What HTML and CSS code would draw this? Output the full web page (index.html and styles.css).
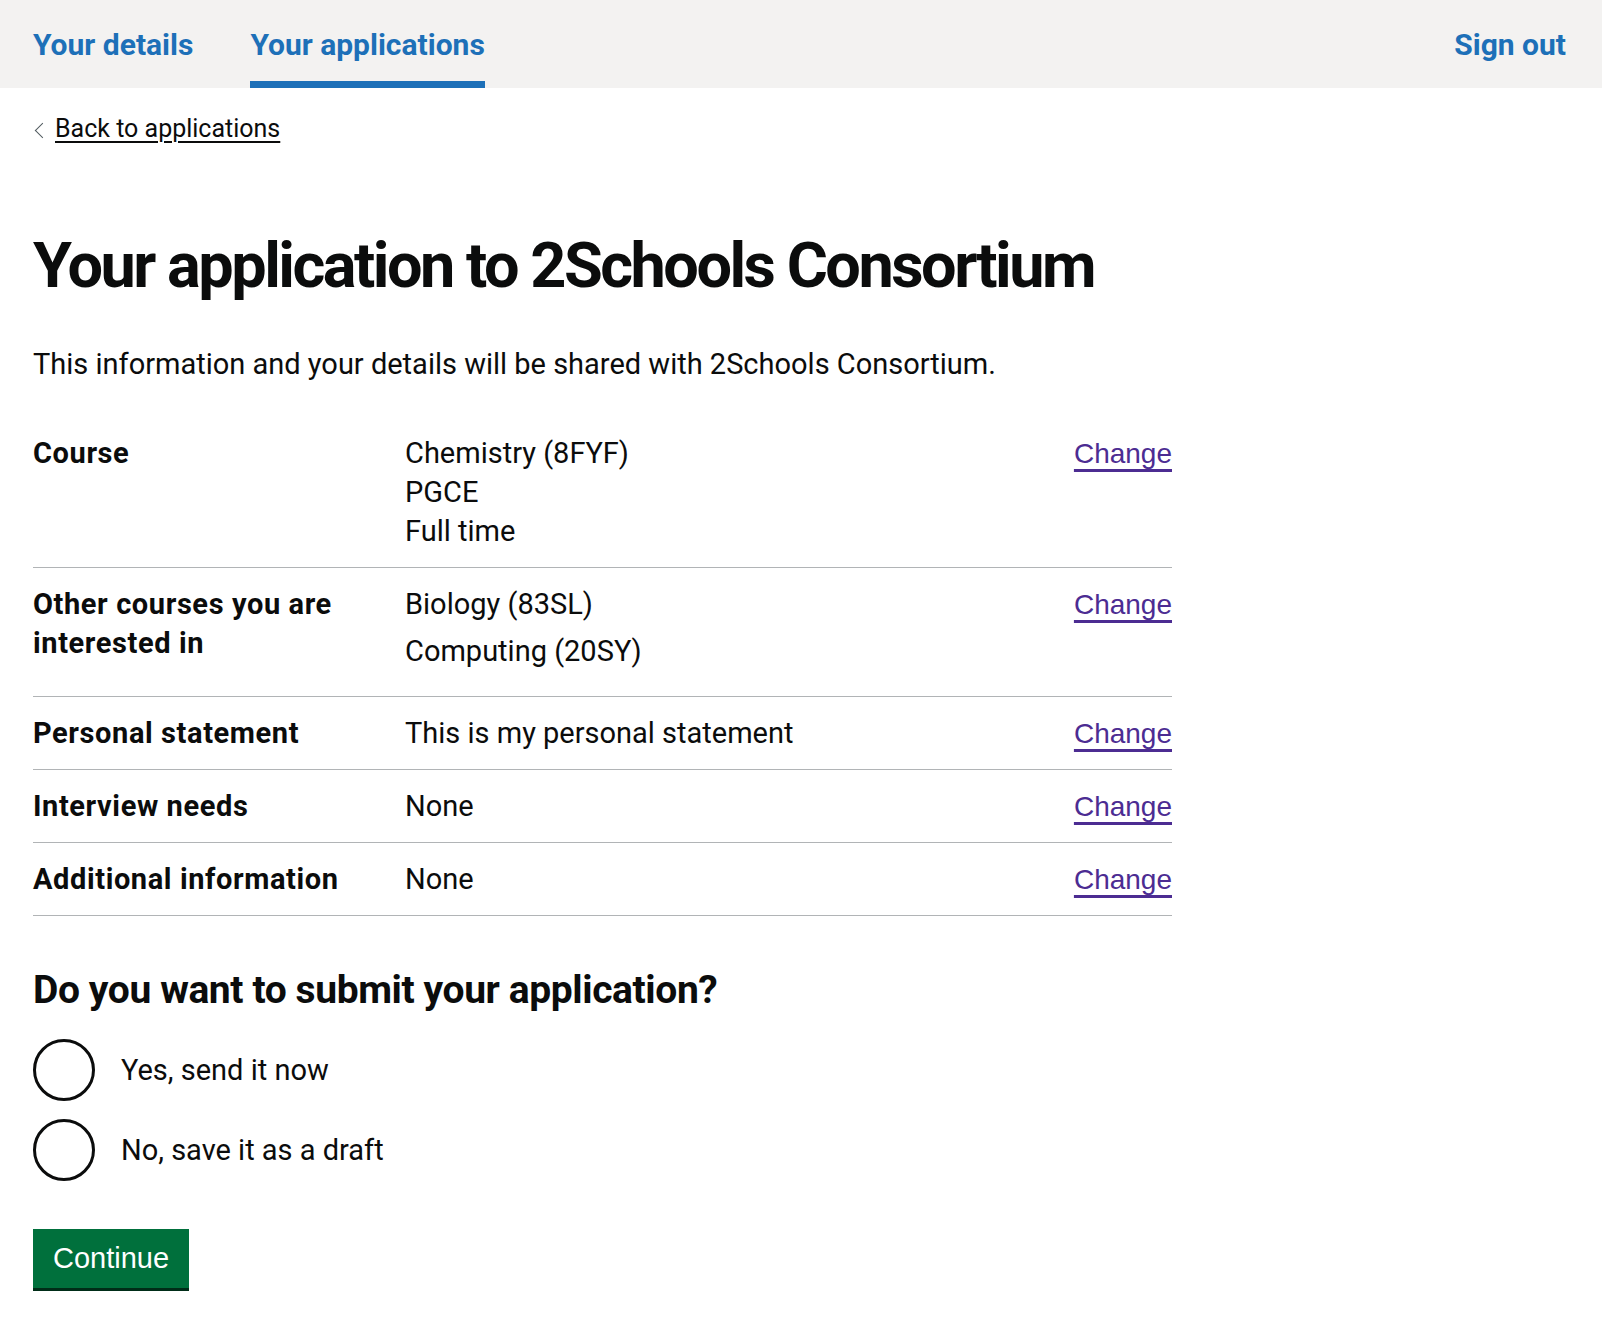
FILE: index.html
```html
<!DOCTYPE html>
<html lang="en">
<head>
<meta charset="utf-8">
<title>Your application to 2Schools Consortium</title>
<link rel="stylesheet" href="styles.css">
</head>
<body>
<header class="top-bar">
  <nav class="primary-nav">
    <a class="nav-link" href="#">Your details</a>
    <a class="nav-link nav-link-active" href="#">Your applications</a>
  </nav>
  <a class="nav-link" href="#">Sign out</a>
</header>
<main class="page">
  <a class="back-link" href="#">Back to applications</a>
  <h1 class="heading-xl">Your application to 2Schools Consortium</h1>
  <p class="body">This information and your details will be shared with 2Schools Consortium.</p>
  <dl class="summary-list">
    <div class="summary-row">
      <dt class="summary-key">Course</dt>
      <dd class="summary-value">
        <span class="value-line">Chemistry (8FYF)</span>
        <span class="value-line">PGCE</span>
        <span class="value-line">Full time</span>
      </dd>
      <dd class="summary-actions"><a class="change-link" href="#">Change</a></dd>
    </div>
    <div class="summary-row">
      <dt class="summary-key">Other courses you are interested in</dt>
      <dd class="summary-value">
        <p class="value-para">Biology (83SL)</p>
        <p class="value-para">Computing (20SY)</p>
      </dd>
      <dd class="summary-actions"><a class="change-link" href="#">Change</a></dd>
    </div>
    <div class="summary-row">
      <dt class="summary-key">Personal statement</dt>
      <dd class="summary-value">This is my personal statement</dd>
      <dd class="summary-actions"><a class="change-link" href="#">Change</a></dd>
    </div>
    <div class="summary-row">
      <dt class="summary-key">Interview needs</dt>
      <dd class="summary-value">None</dd>
      <dd class="summary-actions"><a class="change-link" href="#">Change</a></dd>
    </div>
    <div class="summary-row">
      <dt class="summary-key">Additional information</dt>
      <dd class="summary-value">None</dd>
      <dd class="summary-actions"><a class="change-link" href="#">Change</a></dd>
    </div>
  </dl>
  <fieldset class="fieldset">
    <legend class="heading-m">Do you want to submit your application?</legend>
    <div class="radios">
      <label class="radio-item">
        <input class="radio-input" type="radio" name="submit" value="yes">
        <span class="radio-circle"></span>
        <span class="radio-label">Yes, send it now</span>
      </label>
      <label class="radio-item">
        <input class="radio-input" type="radio" name="submit" value="no">
        <span class="radio-circle"></span>
        <span class="radio-label">No, save it as a draft</span>
      </label>
    </div>
  </fieldset>
  <button class="button" type="submit">Continue</button>
</main>
</body>
</html>
```
FILE: styles.css
```css
* { box-sizing: border-box; }

html, body {
  margin: 0;
  padding: 0;
  background: #ffffff;
}

body {
  font-family: "Roboto", "Liberation Sans", sans-serif;
  color: #0b0c0c;
  font-size: 29px;
  line-height: 39px;
}

.top-bar {
  display: flex;
  justify-content: space-between;
  align-items: stretch;
  height: 88px;
  background: #f3f2f1;
  padding: 0 36px 0 33px;
}

.primary-nav {
  display: flex;
  gap: 57px;
}

.nav-link {
  display: flex;
  align-items: center;
  font-size: 30px;
  font-weight: 700;
  color: #1d70b8;
  text-decoration: none;
  position: relative;
}

.nav-link-active::after {
  content: "";
  position: absolute;
  left: 0;
  right: 0;
  bottom: 0;
  height: 7px;
  background: #1d70b8;
}

.page {
  width: 1172px;
  padding: 0 0 60px 33px;
}

.back-link {
  display: inline-block;
  position: relative;
  margin-top: 26px;
  padding-left: 22px;
  font-size: 25px;
  line-height: 30px;
  color: #0b0c0c;
  text-decoration: underline;
  text-decoration-thickness: 2px;
  text-underline-offset: 4px;
}

.back-link::before {
  content: "";
  position: absolute;
  left: 4px;
  top: 11px;
  width: 10px;
  height: 10px;
  border-style: solid;
  border-color: #505a5f;
  border-width: 1.5px 1.5px 0 0;
  transform: rotate(-135deg);
}

.heading-xl {
  margin: 81px 0 42px;
  font-size: 63px;
  line-height: 75px;
  font-weight: 700;
  letter-spacing: -2.5px;
  white-space: nowrap;
}

.body {
  margin: 0 0 33px;
}

.summary-list {
  margin: 0 0 49px;
}

.summary-row {
  display: flex;
  border-bottom: 1px solid #b1b4b6;
}

.summary-key,
.summary-value,
.summary-actions {
  margin: 0;
  padding: 16.5px 0;
}

.summary-key {
  width: 372px;
  padding-right: 30px;
  font-weight: 700;
  letter-spacing: 0.6px;
}

.summary-value {
  width: 600px;
  padding-right: 30px;
}

.value-line {
  display: block;
}

.value-para {
  margin: 0 0 8.5px;
}

.summary-actions {
  flex: 1;
  text-align: right;
}

.change-link {
  font-family: "Liberation Sans", Arial, sans-serif;
  font-size: 28px;
  color: #4c2c92;
  text-decoration: underline;
  text-decoration-thickness: 3px;
  text-underline-offset: 6px;
}

.fieldset {
  margin: 0;
  padding: 0;
  border: 0;
  min-width: 0;
}

.heading-m {
  padding: 0;
  margin: 0 0 24px;
  font-size: 39px;
  line-height: 50px;
  font-weight: 700;
  letter-spacing: -0.4px;
}

.radios {
  display: flex;
  flex-direction: column;
  gap: 18px;
}

.radio-item {
  display: flex;
  align-items: center;
  gap: 26px;
  cursor: pointer;
}

.radio-input {
  position: absolute;
  opacity: 0;
  width: 1px;
  height: 1px;
  margin: 0;
}

.radio-circle {
  width: 62px;
  height: 62px;
  flex: none;
  border: 3px solid #0b0c0c;
  border-radius: 50%;
  background: #ffffff;
}

.radio-label {
  font-size: 29px;
}

.button {
  margin-top: 48px;
  display: inline-block;
  height: 59px;
  padding: 0 20px;
  border: 0;
  border-radius: 0;
  background: #00703c;
  box-shadow: 0 3px 0 #002d18;
  color: #ffffff;
  font-family: "Liberation Sans", Arial, sans-serif;
  font-size: 29px;
  line-height: 59px;
  cursor: pointer;
}
```
